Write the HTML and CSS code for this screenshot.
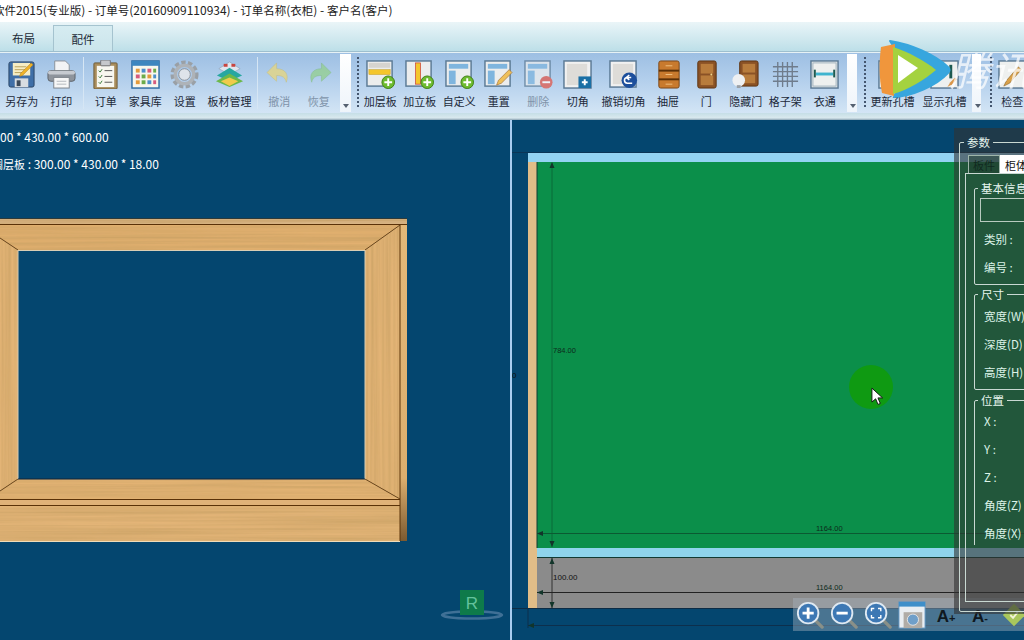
FILE: index.html
```html
<!DOCTYPE html>
<html lang="zh-CN">
<head>
  <meta charset="UTF-8">
  <title>衣柜设计软件2015</title>
  <link rel="stylesheet" href="styles.css">
</head>
<body>
  <div class="app">
    <div class="titlebar">软件<span class="num">2015(</span>专业版<span class="num">) - </span>订单号<span class="num">(20160909110934) - </span>订单名称<span class="num">(</span>衣柜<span class="num">) - </span>客户名<span class="num">(</span>客户<span class="num">)</span></div>

    <div class="tabs">
      <div class="tab">布局</div>
      <div class="tab tab-active">配件</div>
    </div>

    <div class="ribbon">
      <div class="tool">
        <svg viewBox="0 0 30 30"><rect x="2" y="2" width="26" height="26" rx="2" fill="#3f6fa8" stroke="#2b4566"/><rect x="6" y="3" width="18" height="13" fill="#f6edc4"/><path d="M8 7h12M8 10h12M8 13h9" stroke="#b9a25c"/><path d="M14 14l11-11 2 2-11 11-3 1z" fill="#f0b429" stroke="#a8741a" stroke-width=".5"/><rect x="8" y="19" width="14" height="9" fill="#d8dde2"/><rect x="10" y="21" width="4" height="6" fill="#3c4a5a"/></svg>
        <span>另存为</span>
      </div>
      <div class="tool">
        <svg viewBox="0 0 30 30"><path d="M8 1h11l4 4v8H8z" fill="#f2f3f5" stroke="#8b9199"/><rect x="1" y="11" width="28" height="11" rx="3" fill="#8e949c" stroke="#5d636b"/><rect x="1" y="11" width="28" height="4" rx="2" fill="#c6cad0"/><rect x="7" y="18" width="16" height="11" fill="#f7f7f7" stroke="#7d838b"/><path d="M10 22h10M10 25h10" stroke="#b4b8be"/></svg>
        <span>打印</span>
      </div>
      <div class="sep"></div>
      <div class="tool">
        <svg viewBox="0 0 30 30"><rect x="3" y="3" width="24" height="27" rx="1" fill="#a98d5c" stroke="#6e5a37"/><rect x="6" y="6" width="18" height="22" fill="#f8f7f0"/><rect x="10" y="0" width="10" height="6" rx="1" fill="#c6c8cc" stroke="#6f7278"/><path d="M8 11l1.500 1.500 2-3M8 17l1.500 1.500 2-3M8 23l1.500 1.500 2-3" fill="none" stroke="#3a7a3a"/><path d="M14 11h8M14 17h8M14 23h8" stroke="#555"/></svg>
        <span>订单</span>
      </div>
      <div class="tool">
        <svg viewBox="0 0 30 30"><rect x="1" y="1" width="28" height="28" fill="#f7f7ee" stroke="#2f6da5" stroke-width="1.500"/><rect x="1" y="1" width="28" height="5" fill="#3d86bf"/><g fill="#e39a3b"><rect x="5" y="9" width="4" height="4"/><rect x="17" y="15" width="4" height="4"/><rect x="5" y="21" width="4" height="4"/></g><g fill="#4c8fcb"><rect x="11" y="9" width="4" height="4"/><rect x="23" y="15" width="3" height="4"/><rect x="17" y="21" width="4" height="4"/></g><g fill="#d65a7d"><rect x="17" y="9" width="4" height="4"/><rect x="5" y="15" width="4" height="4"/><rect x="23" y="21" width="3" height="4"/></g><g fill="#6bab4a"><rect x="23" y="9" width="3" height="4"/><rect x="11" y="15" width="4" height="4"/><rect x="11" y="21" width="4" height="4"/></g></svg>
        <span>家具库</span>
      </div>
      <div class="tool">
        <svg viewBox="0 0 30 30"><circle cx="15" cy="15" r="12.500" fill="none" stroke="#9aa0a6" stroke-width="4" stroke-dasharray="4.500 2.400"/><circle cx="15" cy="15" r="9.500" fill="none" stroke="#aeb3b8" stroke-width="3.500"/><circle cx="15" cy="15" r="6" fill="#dfe4ea" stroke="#8b9198"/></svg>
        <span>设置</span>
      </div>
      <div class="tool tool-w50">
        <svg viewBox="0 0 30 30"><path d="M15 2l11 7-11 6-11-6z" fill="#dfe6ef" stroke="#7f93a8" stroke-width=".5"/><rect x="9" y="4" width="4" height="3" fill="#c9453f"/><rect x="17" y="4" width="4" height="3" fill="#c9453f"/><path d="M15 8l13 8-13 6-13-6z" fill="#27a7a0"/><path d="M15 14l14 8-14 6-14-6z" fill="#6cb84a"/><path d="M15 18l9 4-9 5-9-5z" fill="#f0cb4c"/></svg>
        <span>板材管理</span>
      </div>
      <div class="sep"></div>
      <div class="tool tool-off">
        <svg viewBox="0 0 30 30"><path d="M12 3L2 13l10 9v-6c6 0 9 2 10 7 3-8-1-14-10-14z" fill="#e8d67c" stroke="#c7b559" stroke-width=".5"/></svg>
        <span>撤消</span>
      </div>
      <div class="tool tool-off">
        <svg viewBox="0 0 30 30"><path d="M18 3l10 10-10 9v-6c-6 0-9 2-10 7-3-8 1-14 10-14z" fill="#93cf8d" stroke="#72b36c" stroke-width=".5"/></svg>
        <span>恢复</span>
      </div>
      <div class="strip"></div>
      <div class="grip"></div>

      <div class="tool">
        <svg viewBox="0 0 30 30"><rect x="1" y="1" width="26" height="26" fill="#eceded" stroke="#5b7a95" stroke-width="1.500"/><rect x="3" y="3" width="22" height="5" fill="#d6d4cf"/><rect x="3" y="10" width="22" height="5" fill="#f4c62c" stroke="#c09a1c" stroke-width=".5"/><circle cx="23" cy="23" r="6.500" fill="#6dbb2f" stroke="#3f7d16"/><path d="M23 19v8M19 23h8" stroke="#fff" stroke-width="2"/></svg>
        <span>加层板</span>
      </div>
      <div class="tool">
        <svg viewBox="0 0 30 30"><rect x="1" y="1" width="26" height="26" fill="#eceded" stroke="#5b7a95" stroke-width="1.500"/><rect x="11" y="3" width="5" height="22" fill="#f4c62c" stroke="#c9362b" stroke-width=".7"/><circle cx="23" cy="23" r="6.500" fill="#6dbb2f" stroke="#3f7d16"/><path d="M23 19v8M19 23h8" stroke="#fff" stroke-width="2"/></svg>
        <span>加立板</span>
      </div>
      <div class="tool">
        <svg viewBox="0 0 30 30"><rect x="1" y="1" width="26" height="26" fill="#eceded" stroke="#5b7a95" stroke-width="1.500"/><rect x="4" y="4" width="20" height="5" fill="#7fb5de"/><rect x="4" y="11" width="7" height="14" fill="#7fb5de"/><circle cx="23" cy="23" r="6.500" fill="#6dbb2f" stroke="#3f7d16"/><path d="M23 19v8M19 23h8" stroke="#fff" stroke-width="2"/></svg>
        <span>自定义</span>
      </div>
      <div class="tool">
        <svg viewBox="0 0 30 30"><rect x="1" y="1" width="26" height="26" fill="#eceded" stroke="#5b7a95" stroke-width="1.500"/><rect x="4" y="4" width="20" height="5" fill="#7fb5de"/><rect x="4" y="11" width="7" height="14" fill="#7fb5de"/><path d="M13 26l2-5 11-11 3 3-11 11z" fill="#efc05a" stroke="#a5743a" stroke-width=".7"/></svg>
        <span>重置</span>
      </div>
      <div class="tool tool-off">
        <svg viewBox="0 0 30 30"><rect x="1" y="1" width="26" height="26" fill="#eceded" stroke="#5b7a95" stroke-width="1.500"/><rect x="4" y="4" width="20" height="5" fill="#7fb5de"/><rect x="4" y="11" width="7" height="14" fill="#7fb5de"/><circle cx="23" cy="23" r="6.500" fill="#e0584c"/><path d="M19 23h8" stroke="#fff" stroke-width="2"/></svg>
        <span>删除</span>
      </div>
      <div class="tool">
        <svg viewBox="0 0 30 30"><rect x="1" y="1" width="28" height="28" fill="#f1f1f1" stroke="#5b7a95" stroke-width="1.500"/><rect x="4" y="4" width="21" height="22" fill="#dedcd8"/><rect x="16" y="17" width="13" height="12" fill="#1a6fa5"/><path d="M22.500 20v6M19.500 23h6" stroke="#fff" stroke-width="2"/></svg>
        <span>切角</span>
      </div>
      <div class="tool tool-w52">
        <svg viewBox="0 0 30 30"><rect x="1" y="1" width="27" height="27" fill="#f1f1f1" stroke="#5b7a95" stroke-width="1.500"/><rect x="4" y="4" width="21" height="21" fill="#dedcd8"/><circle cx="21" cy="21" r="8" fill="#1d4f9c"/><path d="M24 24h-5a2.500 2.500 0 0 1 0-6h4M21 15.500l-3 2.500 3 2.500" fill="none" stroke="#fff" stroke-width="1.600"/></svg>
        <span>撤销切角</span>
      </div>
      <div class="tool tool-w37">
        <svg viewBox="0 0 30 30"><rect x="5" y="1" width="21" height="28" rx="2" fill="#c87a2e" stroke="#7a4517"/><rect x="5" y="10" width="21" height="2" fill="#5a3008"/><rect x="5" y="19" width="21" height="2" fill="#5a3008"/><path d="M12 6h7M12 15h7M12 25h7" stroke="#f0c080"/></svg>
        <span>抽屉</span>
      </div>
      <div class="tool">
        <svg viewBox="0 0 30 30"><rect x="6" y="1" width="19" height="28" rx="2" fill="#8a5226" stroke="#5d3412"/><rect x="9" y="4" width="13" height="10" fill="#b87c3c"/><rect x="9" y="16" width="13" height="10" fill="#b87c3c"/><circle cx="20" cy="15" r="1" fill="#f2d98a"/></svg>
        <span>门</span>
      </div>
      <div class="tool">
        <svg viewBox="0 0 30 30"><rect x="9" y="1" width="19" height="26" rx="2" fill="#8a5226" stroke="#5d3412"/><rect x="12" y="4" width="13" height="9" fill="#b87c3c"/><rect x="12" y="15" width="13" height="9" fill="#b87c3c"/><circle cx="8" cy="21" r="6.500" fill="#eef0f2"/><rect x="6" y="26" width="4" height="3" fill="#9aa0a6"/></svg>
        <span>隐藏门</span>
      </div>
      <div class="tool">
        <svg viewBox="0 0 30 30"><path d="M7 2v26M12 2v26M17 2v26M22 2v26M2 7h26M2 12h26M2 17h26M2 22h26" stroke="#6f7c8c" stroke-width="1.400"/></svg>
        <span>格子架</span>
      </div>
      <div class="tool">
        <svg viewBox="0 0 30 30"><rect x="1" y="1" width="28" height="28" fill="#eef0ef" stroke="#5b7a95" stroke-width="1.500"/><rect x="3" y="3" width="24" height="24" fill="none" stroke="#9fb0bd"/><rect x="6" y="13" width="18" height="3" fill="#3fb4cf"/><rect x="4" y="10" width="2" height="8" fill="#1e5a50"/><rect x="24" y="10" width="2" height="8" fill="#1e5a50"/></svg>
        <span>衣通</span>
      </div>
      <div class="strip strip-b"></div>
      <div class="grip grip-b"></div>

      <div class="tool tool-w52">
        <svg viewBox="0 0 30 30"><rect x="1" y="1" width="28" height="28" fill="#eef0ef" stroke="#5b7a95" stroke-width="1.500"/></svg>
        <span>更新孔槽</span>
      </div>
      <div class="tool tool-w52">
        <svg viewBox="0 0 30 30"><rect x="1" y="1" width="28" height="28" fill="#eef0ef" stroke="#5b7a95" stroke-width="1.500"/><rect x="20" y="5" width="3" height="14" fill="#1e5a50"/><path d="M18 28l3-5 5-5 2 2-5 5z" fill="#d9964a"/></svg>
        <span>显示孔槽</span>
      </div>
      <div class="strip strip-c"></div>
      <div class="grip grip-c"></div>
      <div class="tool">
        <svg viewBox="0 0 30 30"><rect x="1" y="1" width="28" height="28" fill="#eef0ef" stroke="#5b7a95" stroke-width="1.500"/><path d="M6 27l3-6 12-14 3 3-12 14z" fill="#d9a14a" stroke="#8a6226" stroke-width=".6"/></svg>
        <span>检查</span>
      </div>
    </div>
    <div class="ribbon-foot"></div>

    <div class="views">
      <div class="view view-left">
        <p class="dim dim-one">00 * 430.00 * 600.00</p>
        <p class="dim dim-two"><span class="dim-name">搁层板</span> : 300.00 * 430.00 * 18.00</p>
        <svg class="canvas" viewBox="0 120 510 520">
          <defs>
            <filter id="grain-h" x="0" y="0" width="100%" height="100%">
              <feTurbulence type="fractalNoise" baseFrequency="0.004 0.35" numOctaves="3" seed="4"/>
              <feColorMatrix values="0 0 0 0 0.55  0 0 0 0 0.34  0 0 0 0 0.12  0 0 0 1.100 -0.26"/>
              <feComposite in2="SourceGraphic" operator="in"/>
              <feMerge><feMergeNode in="SourceGraphic"/><feMergeNode/></feMerge>
            </filter>
            <filter id="grain-v" x="0" y="0" width="100%" height="100%">
              <feTurbulence type="fractalNoise" baseFrequency="0.35 0.004" numOctaves="3" seed="9"/>
              <feColorMatrix values="0 0 0 0 0.55  0 0 0 0 0.34  0 0 0 0 0.12  0 0 0 1.100 -0.26"/>
              <feComposite in2="SourceGraphic" operator="in"/>
              <feMerge><feMergeNode in="SourceGraphic"/><feMergeNode/></feMerge>
            </filter>
            <linearGradient id="edge" x1="0" y1="0" x2="0" y2="1">
              <stop offset="0" stop-color="#e3b878"/>
              <stop offset=".8" stop-color="#dcae6e"/>
              <stop offset="1" stop-color="#7c5a30"/>
            </linearGradient>
          </defs>
          <rect x="0" y="218" width="407" height="1.500" fill="#2d3a3a"/>
          <rect x="0" y="219" width="407" height="6" fill="#d9b586" filter="url(#grain-h)"/>
          <rect x="400" y="225" width="7" height="316" fill="url(#edge)"/>
          <path d="M0 225H400L365 250H18L0 238z" fill="#e2b070" filter="url(#grain-h)"/>
          <path d="M400 225V499L365 479V250z" fill="#e3b476" filter="url(#grain-v)"/>
          <path d="M0 238L18 250V479L0 491z" fill="#e3b476" filter="url(#grain-v)"/>
          <path d="M0 491L18 479H365L400 499H0z" fill="#e4b474" filter="url(#grain-h)"/>
          <rect x="0" y="499" width="400" height="7" fill="#e0b278"/>
          <rect x="0" y="506" width="400" height="35" fill="#e4b578" filter="url(#grain-h)"/>
          <path d="M0 224.500H407M0 499.500H400M0 505.500H400M400 225V541" stroke="#5a3208" stroke-width="1" fill="none"/>
          <path d="M400 225L365 250M0 238L18 250M0 491L18 479M365 479L400 499" stroke="#5a3208" stroke-width=".8" fill="none"/>
          <path d="M18 250.500H365M18 250V479M365 250V479" stroke="#d9cdb4" stroke-width="1" fill="none"/>
          <path d="M18 479H365" stroke="#10243a" stroke-width="1"/>
          <path d="M0 541.500H400" stroke="#f0dcb8" stroke-width="1"/>
          <ellipse cx="472" cy="615" rx="30" ry="3.500" fill="none" stroke="#3f7096" stroke-width="2.500"/>
          <rect x="460" y="590" width="24" height="25" fill="#0e7a4a"/>
          <text x="472" y="609" class="axis">R</text>
        </svg>
      </div>
      <div class="view view-right">
        <svg class="canvas" viewBox="512 120 512 520">
          <rect x="512" y="152" width="512" height="1" fill="#0b3556"/>
          <rect x="528" y="153" width="496" height="9" fill="#93d3f2"/>
          <rect x="528" y="162" width="9" height="446" fill="#e1bd88"/>
          <rect x="537" y="162" width="487" height="386" fill="#0b8f4a"/>
          <rect x="537" y="548" width="487" height="9" fill="#8fd4ec"/>
          <rect x="537" y="557" width="487" height="51" fill="#8b8b8b"/>
          <path d="M537 162V548M537 557.500H1024" stroke="#123a33" stroke-width="1"/>
          <path d="M512 608.500H1024" stroke="#0d2c45" stroke-width="1"/>
          <path d="M552 163V547" stroke="#0a6b38" stroke-width="1"/>
          <path d="M552 558V608" stroke="#303030" stroke-width="1"/>
          <path d="M537 533.500H1024" stroke="#0b5a32" stroke-width="1"/>
          <path d="M537 592.500H1024" stroke="#222" stroke-width="1"/>
          <path d="M528 625.500H1024M528 608V628" stroke="#0d2f4c" stroke-width="1"/>
          <path d="M552 162l-2.500 6h5zM552 547l-2.500-6h5zM552 558l-2.500 6h5zM552 608l-2.500-6h5zM537 533.500l6-2.500v5zM537 592.500l6-2.500v5zM528 625.500l6-2.500v5z" fill="#12352a"/>
          <text x="553" y="353" class="label">784.00</text>
          <text x="816" y="531" class="label">1164.00</text>
          <text x="553" y="580" class="label label-big">100.00</text>
          <text x="816" y="590" class="label">1164.00</text>
          <text x="512" y="378" class="label label-big">0</text>
        </svg>
      </div>
    </div>

    <div class="spot">
      <svg class="cursor" viewBox="0 0 14 20"><path d="M1 1v15l4-3.500 2.500 6 2.500-1-2.500-6h5z" fill="#fff" stroke="#111" stroke-width="1"/></svg>
    </div>

    <div class="zoombar">
      <svg viewBox="0 0 30 30" class="zb"><path d="M21 21l7 7" stroke="#8a9088" stroke-width="3.500" stroke-linecap="round"/><circle cx="13" cy="13" r="11" fill="#3d78b4" stroke="#dfe9f2" stroke-width="2"/><path d="M13 7v12M7 13h12" stroke="#fff" stroke-width="3"/></svg>
      <svg viewBox="0 0 30 30" class="zb"><path d="M21 21l7 7" stroke="#8a9088" stroke-width="3.500" stroke-linecap="round"/><circle cx="13" cy="13" r="11" fill="#3d78b4" stroke="#dfe9f2" stroke-width="2"/><path d="M7 13h12" stroke="#fff" stroke-width="3"/></svg>
      <svg viewBox="0 0 30 30" class="zb"><path d="M21 21l7 7" stroke="#8a9088" stroke-width="3.500" stroke-linecap="round"/><circle cx="13" cy="13" r="11" fill="#3d78b4" stroke="#dfe9f2" stroke-width="2"/><path d="M8 11V8h3M15 8h3v3M18 15v3h-3M11 18H8v-3" fill="none" stroke="#fff" stroke-width="1.500"/></svg>
      <svg viewBox="0 0 30 30" class="zb"><rect x="1" y="1" width="28" height="28" fill="#e9eef2" stroke="#5a90bd"/><rect x="1" y="1" width="28" height="5" fill="#3f8fc9"/><rect x="6" y="12" width="20" height="17" fill="#b0aca6"/><circle cx="16" cy="20" r="6" fill="#6f9fc9" stroke="#e6e6e6"/></svg>
      <span class="font-btn">A<small>+</small></span>
      <span class="font-btn">A<small>-</small></span>
      <svg viewBox="0 0 30 30" class="zb"><path d="M15 3l12 12-12 12L3 15z" fill="#a9c75c"/><path d="M11 15l3 3 5-6" fill="none" stroke="#f2f5d6" stroke-width="2"/></svg>
    </div>

    <div class="panel">
      <fieldset class="box">
        <legend>参数</legend>
        <div class="panel-tabs">
          <div class="panel-tab">板件</div>
          <div class="panel-tab panel-tab-on">柜体</div>
        </div>
        <div class="tab-box">
          <div class="scroller">
            <fieldset class="group">
              <legend>基本信息</legend>
              <div class="field"></div>
              <div class="row">类别 :</div>
              <div class="row">编号 :</div>
            </fieldset>
            <fieldset class="group group-size">
              <legend>尺寸</legend>
              <div class="row">宽度(W)</div>
              <div class="row">深度(D)</div>
              <div class="row">高度(H)</div>
            </fieldset>
            <fieldset class="group group-pos">
              <legend>位置</legend>
              <div class="row">X :</div>
              <div class="row">Y :</div>
              <div class="row">Z :</div>
              <div class="row">角度(Z)</div>
              <div class="row">角度(X)</div>
            </fieldset>
          </div>
        </div>
      </fieldset>
    </div>

    <div class="mark">
      <svg class="mark-logo" viewBox="0 0 74 62"><path d="M12 3C32 6 56 16 70 29Q73 32 70 35C58 48 34 58 16 59 26 40 26 22 12 3z" fill="#37a6de" stroke="#37a6de" stroke-width="2" stroke-linejoin="round"/><path d="M3 9C1 24 1 40 4 55L16 58 17 6z" fill="#f0963c"/><path d="M15 9C30 14 46 22 58 32 46 42 30 52 15 56z" fill="#a4d23f"/><path d="M20 17l20 13-20 15z" fill="#fff"/></svg>
      <span class="mark-text">腾讯视频</span>
    </div>
  </div>
</body>
</html>
```

FILE: styles.css
```css
* {
  margin: 0;
  padding: 0;
  box-sizing: border-box;
}

html, body {
  width: 1024px;
  height: 640px;
  overflow: hidden;
}

body {
  font-family: "Noto Sans CJK SC", "Liberation Sans", sans-serif;
  font-size: 11px;
  background: #04466f;
}

.app {
  position: relative;
  width: 1024px;
  height: 640px;
  overflow: hidden;
  display: flex;
  flex-direction: column;
  filter: blur(.3px); /* source is a video frame, edges are soft */
}

/* title + tabs */
.titlebar {
  height: 22px;
  background: #fff;
  color: #222;
  font-size: 11.5px;
  line-height: 20px;
  white-space: pre;
  text-indent: -7px;
}

.num {
  font-size: 12px;
}

.tabs {
  height: 30px;
  display: flex;
  align-items: flex-end;
  background: linear-gradient(180deg, #eaf5f8, #bddfe8);
  border-bottom: 1px solid #9dbfcf;
  padding-top: 3px;
}

.tab {
  width: 54px;
  height: 26px;
  line-height: 26px;
  padding-right: 6px;
  text-align: center;
  font-size: 11.5px;
  color: #1c2a35;
  border-right: 1px solid #a5c3cf;
}

.tab-active {
  width: 59px;
  padding-right: 0;
  background: linear-gradient(180deg, #d6ecf1, #cbe5ec);
  border-top: 1px solid #a5c3cf;
}

/* ribbon */
.ribbon {
  height: 61px;
  display: flex;
  padding-left: 2px;
  background: linear-gradient(180deg, #9dbfe3 0%, #b3cfec 45%, #d3e5f5 100%);
  border-top: 1px solid #e6f1f5;
  overflow: hidden;
}

.tool {
  flex: none;
  width: 39.5px;
  display: flex;
  flex-direction: column;
  align-items: center;
  padding-top: 7px;
  color: #1d2a3a;
  white-space: nowrap;
}

.tool svg {
  width: 29px;
  height: 29px;
  flex: none;
}

.tool span {
  margin-top: 4px;
  line-height: 16px;
}

.tool-w50 { width: 50px; }
.tool-w52 { width: 52px; }
.tool-w37 { width: 37px; }

.tool-off {
  color: #7f93a9;
}

.tool-off svg {
  opacity: .75;
}

.sep {
  flex: none;
  width: 5px;
  margin: 4px 0;
  background: linear-gradient(90deg, transparent 2px, #d6e6f4 2px, #d6e6f4 3px, transparent 3px);
}

.strip {
  flex: none;
  width: 11px;
  margin: 1px;
  background: linear-gradient(180deg, #fff, #eef4fa);
  position: relative;
}

.strip::after {
  content: "";
  position: absolute;
  left: 3px;
  bottom: 4px;
  border: 3px solid transparent;
  border-top: 4px solid #556070;
  border-bottom: 0;
}

.strip-b { width: 10px; margin-left: 2px; }
.strip-c { width: 9px; margin-left: 1px; }

.grip {
  flex: none;
  width: 4px;
  margin: 4px 0 6px 5px;
  border-left: 2px dotted #44566f;
}

.grip-b { margin-left: 6px; width: 3px; }
.grip-c { margin-left: 8px; width: 3px; }

.ribbon-foot {
  height: 7px;
  background: linear-gradient(180deg, #c5dee6, #d9e9ee 70%, #8ba3b3);
}

/* viewports */
.views {
  flex: 1;
  display: flex;
  min-height: 0;
}

.view {
  position: relative;
  background: #04466f;
}

.view-left { width: 510px; }

.view-right {
  width: 514px;
  border-left: 2px solid #a9cdf0;
}

.canvas {
  display: block;
  width: 100%;
  height: 100%;
}

.dim {
  position: absolute;
  color: #fff;
  font-size: 12px;
  line-height: 16px;
  white-space: nowrap;
}

.dim-one { top: 9px; left: 0; }
.dim-two { top: 36px; left: -8px; }

.dim-name {
  font-size: 11px;
}

.axis {
  font-family: "Liberation Sans", sans-serif;
  font-size: 17px;
  fill: #63c29c;
  text-anchor: middle;
}

.label {
  font-family: "Liberation Sans", sans-serif;
  font-size: 7.5px;
  fill: #0b2a1a;
}

.label-big {
  font-size: 8px;
  fill: #111;
}

.spot {
  position: absolute;
  left: 849px;
  top: 365px;
  width: 44px;
  height: 44px;
  border-radius: 50%;
  background: #0f9a12;
}

.cursor {
  position: absolute;
  left: 22px;
  top: 22px;
  width: 13px;
  height: 19px;
}

/* zoom bar */
.zoombar {
  position: absolute;
  left: 793px;
  top: 598px;
  width: 231px;
  height: 33px;
  display: flex;
  align-items: center;
  background: rgba(170, 182, 192, .42);
}

.zb {
  flex: none;
  width: 28px;
  height: 28px;
  margin: 0 3px;
}

.font-btn {
  flex: none;
  width: 34px;
  text-align: center;
  font-family: "Liberation Sans", sans-serif;
  font-size: 17px;
  font-weight: bold;
  color: #101820;
  padding-top: 4px;
}

.font-btn small {
  font-size: 11px;
}

/* params panel */
.panel {
  position: absolute;
  left: 954px;
  top: 128px;
  width: 150px;
  height: 486px;
  padding: 6px 5px 0;
  background: rgba(50, 50, 50, .6);
  color: #dcf3e8;
}

.panel legend {
  font-size: 11.5px;
  line-height: 16px;
  padding: 0 3px;
  margin-left: -1px;
  color: #e6f5ee;
}

.box, .group {
  border: 1px solid #c9d8d2;
  border-radius: 2px;
}

.box {
  height: 478px;
  padding: 5px 5px 8px;
}

.panel-tabs {
  display: flex;
  height: 18px;
  margin-left: 3px;
}

.panel-tab {
  width: 32px;
  line-height: 18px;
  text-align: center;
  color: #102a20;
  background: rgba(30, 60, 45, .5);
  border: 1px solid #9fb5aa;
  border-bottom: 0;
}

.panel-tab-on {
  background: #fff;
  color: #111;
  border-color: #fff;
}

.tab-box {
  height: 429px;
  padding: 6px 0 0 8px;
  border: 1px solid #c9d8d2;
}

.scroller {
  height: 365px;
  overflow: hidden;
}

.group {
  padding: 2px 0 3px 9px;
  font-size: 11.5px;
}

.group legend {
  margin-left: -6px;
}

.group-size { margin-top: 1px; padding-top: 0; }
.group-pos { margin-top: 2px; padding-top: 0; height: 170px; }
.group-pos .row:first-of-type { margin-top: -1px; }

.field {
  height: 24px;
  margin: 0 0 3px -4px;
  border: 1px solid #b8cabf;
}

.row {
  height: 28px;
  line-height: 28px;
  white-space: nowrap;
}

/* video watermark */
.mark {
  position: absolute;
  left: 878px;
  top: 38px;
  display: flex;
  align-items: center;
  white-space: nowrap;
}

.mark-logo {
  flex: none;
  width: 74px;
  height: 62px;
}

.mark-text {
  margin-left: -2px;
  font-size: 40px;
  font-style: italic;
  color: rgba(255, 255, 255, .72);
}
```
